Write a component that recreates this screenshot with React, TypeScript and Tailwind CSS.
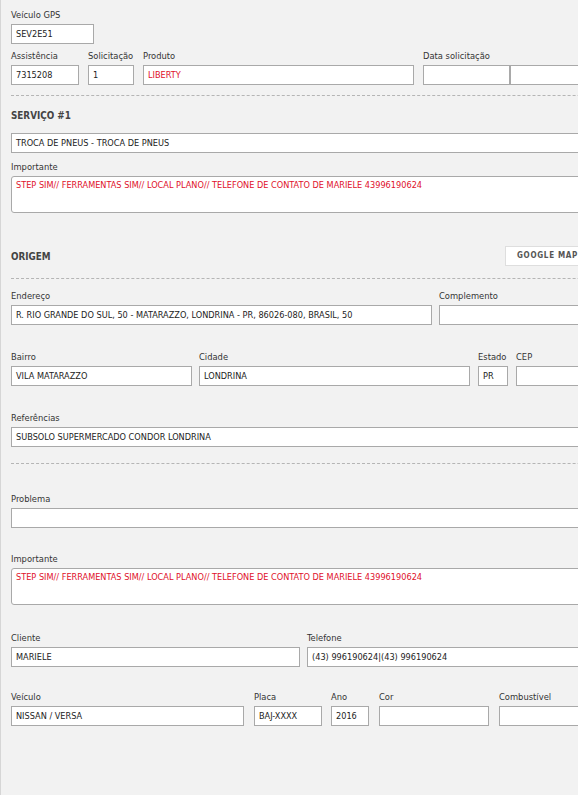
import { ReactNode } from 'react'

const font = { fontFamily: '"DejaVu Sans Condensed", "DejaVu Sans", Verdana, sans-serif' }

interface FieldProps {
  label?: string
  value?: string
  width?: string
  red?: boolean
  className?: string
}

function Label({ children }: { children: ReactNode }) {
  return <div className="h-[12px] mb-[3px] text-[9.3px] leading-[12px] text-[#333] whitespace-nowrap">{children}</div>
}

function Field({ label, value = '', width = 'w-[700px]', red, className = '' }: FieldProps) {
  return (
    <div className={`shrink-0 ${width} ${className}`}>
      {label !== undefined && <Label>{label}</Label>}
      <div
        className={`h-[20px] bg-white border border-[#a9a9a9] pl-[4px] text-[9.1px] leading-[18px] whitespace-nowrap overflow-hidden ${
          red ? 'text-[#e0102a]' : 'text-[#222]'
        }`}
      >
        {value}
      </div>
    </div>
  )
}

function Area({ label, value }: { label: string; value: string }) {
  return (
    <div className="w-[700px]">
      <Label>{label}</Label>
      <div className="h-[37px] bg-white border border-[#a9a9a9] rounded-[3px] px-[4px] pt-[2px] text-[9.1px] leading-[12px] text-[#e0102a] whitespace-nowrap">
        {value}
      </div>
    </div>
  )
}

function Dashed({ className = '' }: { className?: string }) {
  return <div className={`w-[700px] border-t border-dashed border-[#b5b5b5] ${className}`} />
}

function Heading({ children }: { children: ReactNode }) {
  return <div className="text-[9.8px] leading-[12px] font-bold text-[#444]">{children}</div>
}

const importante =
  'STEP SIM// FERRAMENTAS SIM// LOCAL PLANO// TELEFONE DE CONTATO DE MARIELE 43996190624'

export default function App() {
  return (
    <div className="w-[578px] h-[795px] overflow-hidden bg-[#f2f2f2] border-l border-[#d6d6d6]" style={font}>
      <div className="pl-[10px] pt-[9px] w-[720px]">
        <Field label="Veículo GPS" value="SEV2E51" width="w-[83px]" />

        <div className="flex mt-[6px]">
          <Field label="Assistência" value="7315208" width="w-[68px]" />
          <Field label="Solicitação" value="1" width="w-[46px]" className="ml-[9px]" />
          <Field label="Produto" value="LIBERTY" width="w-[271px]" red className="ml-[9px]" />
          <div className="ml-[9px] shrink-0">
            <Label>Data solicitação</Label>
            <div className="flex">
              <div className="w-[87px] h-[20px] bg-white border border-[#a9a9a9]" />
              <div className="w-[100px] h-[20px] bg-white border border-[#a9a9a9]" />
            </div>
          </div>
        </div>

        <Dashed className="mt-[10px]" />

        <div className="mt-[14px]">
          <Heading>SERVIÇO #1</Heading>
        </div>
        <Field value="TROCA DE PNEUS - TROCA DE PNEUS" className="mt-[11px]" />

        <div className="mt-[8px]">
          <Area label="Importante" value={importante} />
        </div>

        <div className="mt-[33px] flex items-center h-[20px] w-[700px]">
          <div className="w-[494px] shrink-0 pt-[1px]">
            <Heading>ORIGEM</Heading>
          </div>
          <div className="h-[20px] bg-white border border-[#dedede] px-[11px] text-[8px] leading-[18px] font-bold tracking-[0.7px] text-[#555] whitespace-nowrap">
            GOOGLE MAPS
          </div>
        </div>

        <Dashed className="mt-[12px]" />

        <div className="flex mt-[11px]">
          <Field
            label="Endereço"
            value="R. RIO GRANDE DO SUL, 50 - MATARAZZO, LONDRINA - PR, 86026-080, BRASIL, 50"
            width="w-[421px]"
          />
          <Field label="Complemento" width="w-[200px]" className="ml-[7px]" />
        </div>

        <div className="flex mt-[26px]">
          <Field label="Bairro" value="VILA MATARAZZO" width="w-[181px]" />
          <Field label="Cidade" value="LONDRINA" width="w-[271px]" className="ml-[7px]" />
          <Field label="Estado" value="PR" width="w-[30px]" className="ml-[8px]" />
          <Field label="CEP" width="w-[120px]" className="ml-[8px]" />
        </div>

        <div className="mt-[26px]">
          <Field label="Referências" value="SUBSOLO SUPERMERCADO CONDOR LONDRINA" />
        </div>

        <Dashed className="mt-[16px]" />

        <div className="mt-[29px]">
          <Field label="Problema" />
        </div>

        <div className="mt-[25px]">
          <Area label="Importante" value={importante} />
        </div>

        <div className="flex mt-[27px]">
          <Field label="Cliente" value="MARIELE" width="w-[289px]" />
          <Field label="Telefone" value="(43) 996190624|(43) 996190624" width="w-[400px]" className="ml-[7px]" />
        </div>

        <div className="flex mt-[24px]">
          <Field label="Veículo" value="NISSAN / VERSA" width="w-[233px]" />
          <Field label="Placa" value="BAJ-XXXX" width="w-[68px]" className="ml-[10px]" />
          <Field label="Ano" value="2016" width="w-[38px]" className="ml-[9px]" />
          <Field label="Cor" width="w-[110px]" className="ml-[10px]" />
          <Field label="Combustível" width="w-[120px]" className="ml-[10px]" />
        </div>
      </div>
    </div>
  )
}
